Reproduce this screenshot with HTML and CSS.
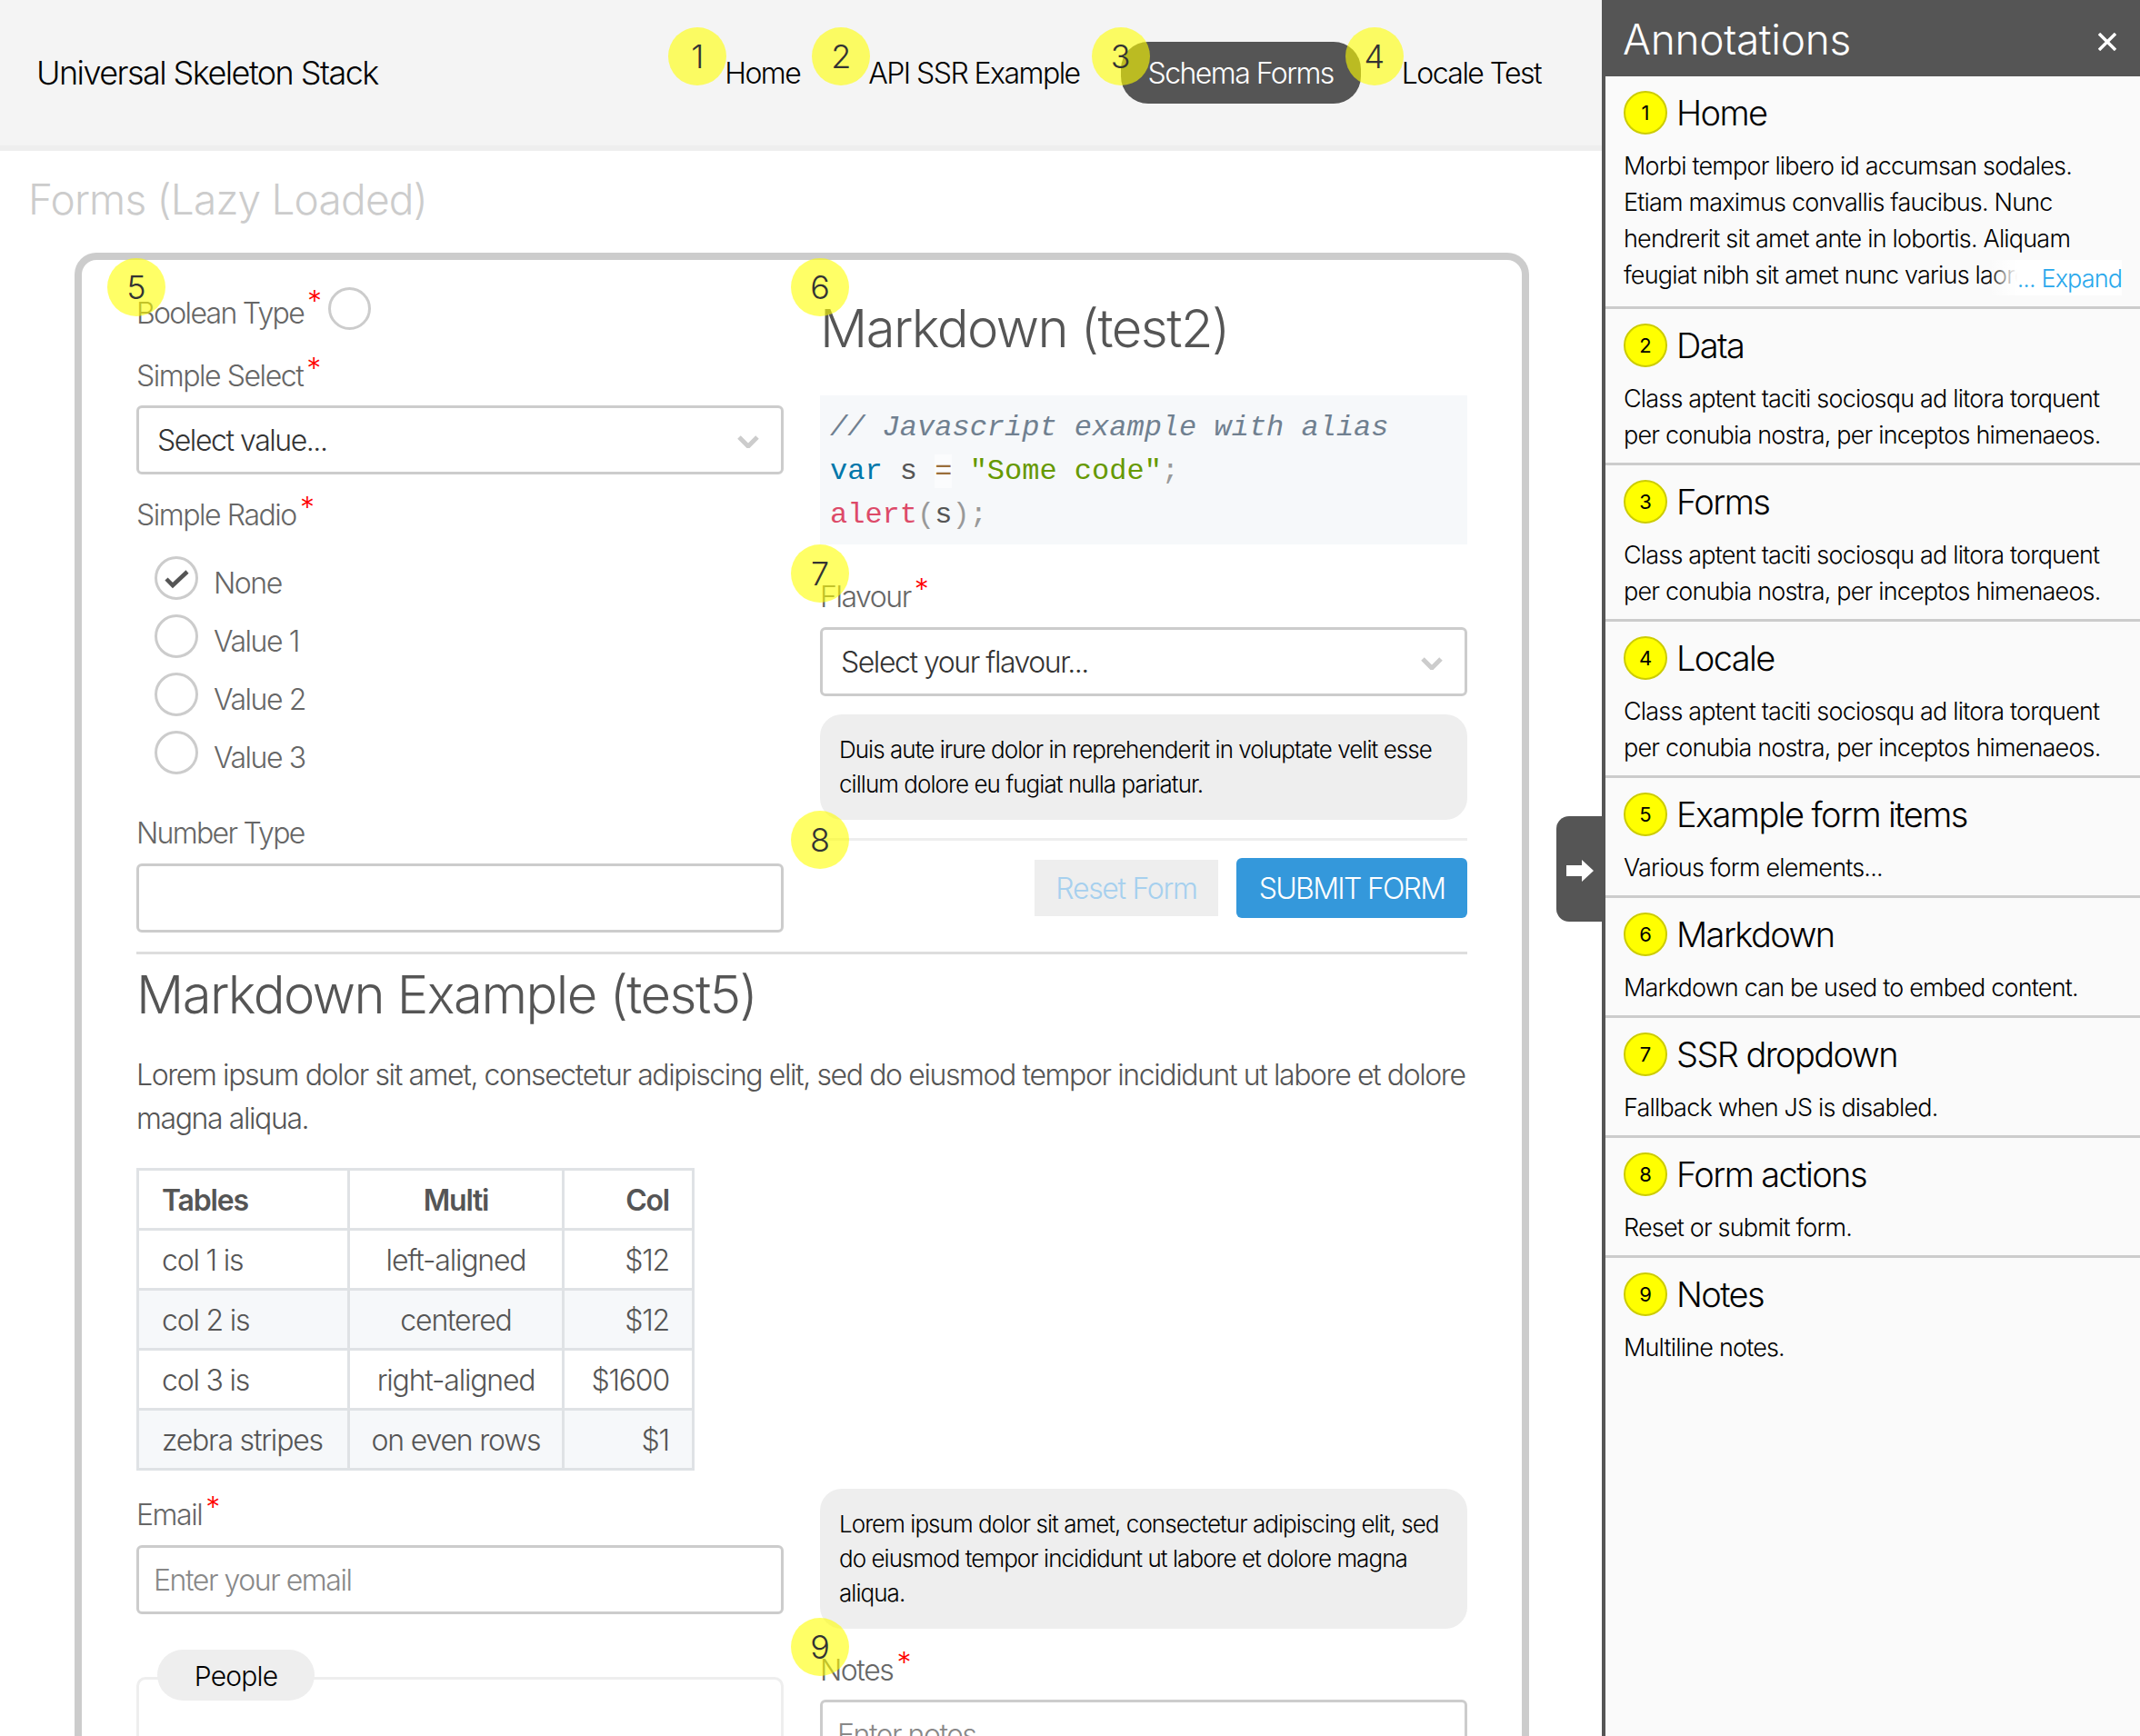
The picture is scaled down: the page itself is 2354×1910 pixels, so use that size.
FILE: index.html
```html
<!DOCTYPE html>
<html lang="en">
<head>
    <meta charset="UTF-8">
    <meta name="viewport" content="width=device-width, initial-scale=1.0">
    <title>Universal Skeleton Stack</title>
    <link rel="stylesheet" href="styles.css">
</head>
<body>
<div class="app">
    <div class="page">
        <header class="topbar">
            <div class="brand">Universal Skeleton Stack</div>
            <nav class="nav">
                <a class="nav-link"><span class="marker">1</span>Home</a>
                <a class="nav-link"><span class="marker">2</span>API SSR Example</a>
                <a class="nav-link active"><span class="marker">3</span>Schema Forms</a>
                <a class="nav-link"><span class="marker">4</span>Locale Test</a>
            </nav>
        </header>

        <main class="content">
            <h1 class="page-title">Forms (Lazy Loaded)</h1>
            <form class="schema-form">
                <div class="form-grid">
                    <div class="form-col">
                        <div class="field toggle-field">
                            <span class="marker">5</span>
                            <label class="label req">Boolean Type</label>
                            <span class="toggle"></span>
                        </div>
                        <div class="field select-field">
                            <label class="label req">Simple Select</label>
                            <div class="select">Select value...
                                <svg class="chevron" viewBox="0 0 24 14"><path d="M2 2l10 10L22 2" fill="none" stroke="#ccc" stroke-width="5"/></svg>
                            </div>
                        </div>
                        <div class="field radio-field">
                            <label class="label req">Simple Radio</label>
                            <div class="radios">
                                <div class="radio-row"><span class="radio">
                                    <svg viewBox="0 0 44 44"><path d="M11 23l7 7 16-15" fill="none" stroke="#555" stroke-width="4.5"/></svg>
                                </span>None</div>
                                <div class="radio-row"><span class="radio"></span>Value 1</div>
                                <div class="radio-row"><span class="radio"></span>Value 2</div>
                                <div class="radio-row"><span class="radio"></span>Value 3</div>
                            </div>
                        </div>
                        <div class="field number-field">
                            <label class="label">Number Type</label>
                            <div class="input"></div>
                        </div>
                    </div>
                    <div class="form-col">
                        <div class="markdown">
                            <span class="marker">6</span>
                            <h2 class="md-title">Markdown (test2)</h2>
                            <pre class="code"><span class="c-comment">// Javascript example with alias</span>
<span class="c-key">var</span> s <span class="c-op">=</span> <span class="c-str">"Some code"</span><span class="c-punc">;</span>
<span class="c-fn">alert</span><span class="c-punc">(</span>s<span class="c-punc">)</span><span class="c-punc">;</span></pre>
                        </div>
                        <div class="field flavour-field">
                            <span class="marker">7</span>
                            <label class="label req">Flavour</label>
                            <div class="select">Select your flavour...
                                <svg class="chevron" viewBox="0 0 24 14"><path d="M2 2l10 10L22 2" fill="none" stroke="#ccc" stroke-width="5"/></svg>
                            </div>
                        </div>
                        <div class="note">Duis aute irure dolor in reprehenderit in voluptate velit esse cillum dolore eu fugiat nulla pariatur.</div>
                        <div class="actions">
                            <span class="marker">8</span>
                            <button type="button" class="btn-reset">Reset Form</button>
                            <button type="button" class="btn-submit">SUBMIT FORM</button>
                        </div>
                    </div>
                </div>

                <div class="md-block">
                    <h2 class="md-title">Markdown Example (test5)</h2>
                    <p class="md-text">Lorem ipsum dolor sit amet, consectetur adipiscing elit, sed do eiusmod tempor incididunt ut labore et dolore magna aliqua.</p>
                    <table class="md-table">
                        <thead>
                            <tr><th>Tables</th><th class="center">Multi</th><th class="right">Col</th></tr>
                        </thead>
                        <tbody>
                            <tr><td>col 1 is</td><td class="center">left-aligned</td><td class="right">$12</td></tr>
                            <tr><td>col 2 is</td><td class="center">centered</td><td class="right">$12</td></tr>
                            <tr><td>col 3 is</td><td class="center">right-aligned</td><td class="right">$1600</td></tr>
                            <tr><td>zebra stripes</td><td class="center">on even rows</td><td class="right">$1</td></tr>
                        </tbody>
                    </table>
                </div>

                <div class="form-grid lower">
                    <div class="form-col">
                        <div class="field email-field">
                            <label class="label req">Email</label>
                            <div class="input placeholder">Enter your email</div>
                        </div>
                        <div class="people">
                            <span class="legend">People</span>
                        </div>
                    </div>
                    <div class="form-col">
                        <div class="note note-lorem">Lorem ipsum dolor sit amet, consectetur adipiscing elit, sed do eiusmod tempor incididunt ut labore et dolore magna aliqua.</div>
                        <div class="field notes-field">
                            <span class="marker">9</span>
                            <label class="label req">Notes</label>
                            <div class="input placeholder">Enter notes</div>
                        </div>
                    </div>
                </div>
            </form>
        </main>
    </div>

    <aside class="sidebar">
        <button type="button" class="sidebar-tab">
            <svg viewBox="0 0 30 24"><path d="M0 6h17V0l13 12-13 12v-6H0z" fill="#fff"/></svg>
        </button>
        <div class="sidebar-head">
            <span>Annotations</span>
            <svg class="close" viewBox="0 0 20 20"><path d="M1 1l18 18M19 1L1 19" stroke="#fff" stroke-width="3.4"/></svg>
        </div>
        <section class="note-item clamped">
            <h3><span class="dot">1</span>Home</h3>
            <p>Morbi tempor libero id accumsan sodales. Etiam maximus convallis faucibus. Nunc hendrerit sit amet ante in lobortis. Aliquam feugiat nibh sit amet nunc varius laoreet.</p>
            <a class="expand">... Expand</a>
        </section>
        <section class="note-item">
            <h3><span class="dot">2</span>Data</h3>
            <p>Class aptent taciti sociosqu ad litora torquent per conubia nostra, per inceptos himenaeos.</p>
        </section>
        <section class="note-item">
            <h3><span class="dot">3</span>Forms</h3>
            <p>Class aptent taciti sociosqu ad litora torquent per conubia nostra, per inceptos himenaeos.</p>
        </section>
        <section class="note-item">
            <h3><span class="dot">4</span>Locale</h3>
            <p>Class aptent taciti sociosqu ad litora torquent per conubia nostra, per inceptos himenaeos.</p>
        </section>
        <section class="note-item">
            <h3><span class="dot">5</span>Example form items</h3>
            <p>Various form elements...</p>
        </section>
        <section class="note-item">
            <h3><span class="dot">6</span>Markdown</h3>
            <p>Markdown can be used to embed content.</p>
        </section>
        <section class="note-item">
            <h3><span class="dot">7</span>SSR dropdown</h3>
            <p>Fallback when JS is disabled.</p>
        </section>
        <section class="note-item">
            <h3><span class="dot">8</span>Form actions</h3>
            <p>Reset or submit form.</p>
        </section>
        <section class="note-item last">
            <h3><span class="dot">9</span>Notes</h3>
            <p>Multiline notes.</p>
        </section>
    </aside>
</div>
</body>
</html>
```
FILE: styles.css
```css
* {
    box-sizing: border-box;
}
html, body {
    margin: 0;
    padding: 0;
    height: 100%;
    overflow: hidden;
}
body {
    font-family: Inter, "Liberation Sans", sans-serif;
    font-weight: 300;
    font-size: 32px;
    letter-spacing: -1.45px;
    color: #555;
    background: #fff;
}
.app {
    display: flex;
    height: 1910px;
    overflow: hidden;
}
.page {
    width: 1762px;
    flex: none;
    overflow: hidden;
}

/* top bar */
.topbar {
    height: 166px;
    display: flex;
    align-items: center;
    justify-content: space-between;
    padding: 0 37px 0 40px;
    background: #f4f4f4;
    border-bottom: 6px solid #eee;
}
.brand {
    font-size: 36px;
    color: #000;
    letter-spacing: -1.55px;
}
.nav {
    display: flex;
    gap: 15px;
}
.nav-link {
    position: relative;
    height: 68px;
    line-height: 70px;
    padding: 0 30px;
    font-size: 32px;
    letter-spacing: -1.55px;
    color: #000;
    border-radius: 30px;
}
.nav-link.active {
    background: #555;
    color: #fff;
}

/* numbered hint bubbles */
.marker {
    position: absolute;
    left: -32px;
    top: -16px;
    width: 64px;
    height: 64px;
    line-height: 64px;
    border-radius: 50%;
    text-align: center;
    font-size: 36px;
    font-weight: 300;
    letter-spacing: 0;
    color: #333;
    background: rgba(255, 255, 0, 0.6);
}

/* main */
.content {
    padding: 0 80px 0 31px;
}
.page-title {
    margin: 0;
    height: 112px;
    line-height: 106px;
    font-size: 46px;
    font-weight: 300;
    color: #ccc;
    letter-spacing: -0.8px;
}
.schema-form {
    width: 1600px;
    margin-left: 51px;
    padding: 0 60px;
    border: 8px solid #ccc;
    border-bottom: 0;
    border-radius: 24px 24px 0 0;
}
.form-grid {
    display: grid;
    grid-template-columns: 712px 712px;
    column-gap: 40px;
    height: 761px;
}
.form-grid.lower {
    height: auto;
    margin-top: 20px;
}
.form-col {
    min-width: 0;
}
.field {
    position: relative;
}
.label {
    display: inline-block;
    height: 45px;
    line-height: 45px;
    color: #666;
}
.label.req::after {
    content: "*";
    color: #f00;
    font-size: 32px;
    position: relative;
    top: -8px;
    margin-left: 4px;
}
.toggle-field {
    display: flex;
    align-items: flex-start;
    margin-top: 30px;
}
.toggle-field .marker {
    top: -32px;
}
.toggle-field .label {
    margin-top: 6px;
    letter-spacing: -1.7px;
}
.toggle-field .label.req::after {
    top: -13px;
}
.toggle {
    width: 47px;
    height: 47px;
    margin-left: 9px;
    border: 3px solid #ccc;
    border-radius: 50%;
}
.select-field {
    margin-top: 24px;
}
.select, .input {
    position: relative;
    height: 76px;
    line-height: 72px;
    border: 3px solid #ccc;
    border-radius: 6px;
    background: #fff;
}
.select {
    margin-top: 11px;
    padding-left: 20px;
    color: #333;
}
.select-field .select {
    margin-top: 10px;
}
.input {
    margin-top: 12px;
    padding-left: 16px;
}
.placeholder {
    color: #888;
}
.chevron {
    position: absolute;
    right: 24px;
    top: 30px;
    width: 24px;
    height: 14px;
}
.radio-field {
    margin-top: 22px;
}
.radios {
    margin-top: 20px;
    padding-left: 20px;
}
.radio-row {
    display: flex;
    align-items: center;
    height: 64px;
    color: #666;
}
.radio {
    width: 48px;
    height: 48px;
    margin: -10px 17px 0 0;
    border: 3px solid #ccc;
    border-radius: 50%;
}
.radio svg {
    display: block;
    width: 44px;
    height: 44px;
    margin: -1px;
}
.number-field {
    margin-top: 29px;
}
.number-field .label {
    letter-spacing: -1.7px;
}
.number-field .input {
    margin-top: 11px;
}
.markdown {
    position: relative;
    padding-top: 40px;
}
.markdown .marker {
    top: -2px;
}
.md-title {
    margin: 0;
    font-size: 58px;
    line-height: 70px;
    font-weight: 300;
    color: #555;
    letter-spacing: -1.55px;
}
.code {
    margin: 39px 0 0;
    height: 164px;
    padding: 12px 11px;
    background: #f6f8fa;
    font-family: "Liberation Mono", monospace;
    font-size: 32px;
    line-height: 48px;
    letter-spacing: 0;
    color: #555;
    font-weight: 400;
}
.c-comment { color: #708090; font-style: italic; }
.c-key { color: #07a; }
.c-op { color: #9a6e3a; background: rgba(255, 255, 255, 0.5); }
.c-str { color: #690; }
.c-fn { color: #dd4a68; }
.c-punc { color: #999; }
.flavour-field {
    margin-top: 35px;
}
.flavour-field .marker, .notes-field .marker {
    top: -35px;
}
.note {
    margin-top: 20px;
    padding: 20px 20px 20px 21px;
    border-radius: 24px;
    background: #eee;
    color: #000;
    font-size: 26px;
    line-height: 38px;
    letter-spacing: -0.96px;
}
.note-lorem {
    margin-top: 0;
}
.actions {
    position: relative;
    display: flex;
    justify-content: flex-end;
    align-items: center;
    gap: 20px;
    margin-top: 20px;
    padding-top: 19px;
    border-top: 3px solid #eee;
}
.actions .marker {
    top: -33px;
}
.btn-reset, .btn-submit {
    font-family: inherit;
    font-weight: 300;
    font-size: 32px;
    border: 0;
    padding: 0;
}
.btn-reset {
    width: 202px;
    height: 62px;
    letter-spacing: -1.3px;
    background: #eee;
    color: #a6d0ee;
}
.btn-submit {
    width: 254px;
    height: 66px;
    letter-spacing: -1.7px;
    border-radius: 6px;
    background: #3498db;
    color: #fff;
}
.md-block {
    border-top: 3px solid #ddd;
}
.md-block .md-title {
    margin-top: 9px;
}
.md-text {
    margin: 30px 0 0;
    line-height: 48px;
    letter-spacing: -1.4px;
}
.md-table {
    margin-top: 30px;
    width: 611px;
    table-layout: fixed;
    border-collapse: collapse;
    letter-spacing: -1.2px;
    border: 3px solid #dfe2e5;
}
.md-table th, .md-table td {
    height: 66px;
    padding: 2px 25px 0;
    border: 3px solid #dfe2e5;
    text-align: left;
}
.md-table th {
    font-weight: 600;
}
.md-table th:nth-child(1) { width: 232px; }
.md-table th:nth-child(2) { width: 236px; }
.md-table th:nth-child(3) { width: 143px; }
.md-table tbody tr:nth-child(even) {
    background: #f6f8fa;
}
.md-table .center { text-align: center; padding: 2px 0 0; }
.md-table .right { text-align: right; }
.email-field {
    margin-top: 6px;
}
.email-field .input {
    margin-top: 11px;
}
.people {
    position: relative;
    height: 200px;
    margin-top: 69px;
    border: 3px solid #eee;
    border-radius: 10px;
}
.legend {
    position: absolute;
    left: 20px;
    top: -33px;
    width: 173px;
    height: 56px;
    line-height: 58px;
    border-radius: 28px;
    text-align: center;
    font-size: 30px;
    letter-spacing: -0.8px;
    background: #eee;
    color: #000;
}
.notes-field {
    margin-top: 23px;
}
.notes-field .input {
    margin-top: 10px;
}

/* annotations */
.sidebar {
    position: relative;
    flex: none;
    width: 592px;
    border-left: 4px solid #555;
    background: #fafafa;
    color: #000;
}
.sidebar-tab {
    position: absolute;
    left: -54px;
    top: 898px;
    width: 50px;
    height: 116px;
    padding: 0;
    border: 0;
    border-radius: 14px 0 0 14px;
    background: #555;
}
.sidebar-tab svg {
    display: block;
    width: 30px;
    height: 24px;
    margin: 4px 0 0 11px;
}
.sidebar-head {
    display: flex;
    justify-content: space-between;
    align-items: center;
    height: 84px;
    margin-left: -4px;
    padding: 2px 26px 0 23px;
    background: #555;
    color: #fff;
    font-size: 46px;
    letter-spacing: -0.3px;
}
.close {
    width: 20px;
    height: 20px;
    margin-top: 6px;
}
.note-item {
    position: relative;
    padding: 16px 20px 10px 20px;
    border-bottom: 3px solid #ccc;
}
.note-item.clamped {
    padding-bottom: 14px;
}
.note-item.last {
    border-bottom: 0;
}
.note-item h3 {
    display: flex;
    align-items: center;
    margin: 0;
    height: 48px;
    font-size: 38px;
    font-weight: 300;
    letter-spacing: -1.6px;
}
.dot {
    width: 48px;
    height: 48px;
    line-height: 44px;
    margin-right: 10px;
    border: 2px solid #cc0;
    border-radius: 50%;
    background: #ff0;
    font-size: 22px;
    font-weight: 400;
    letter-spacing: 0;
    text-align: center;
    flex: none;
}
.note-item p {
    margin: 15px 0 0;
    font-size: 27px;
    line-height: 40px;
    letter-spacing: -0.82px;
}
.clamped p {
    height: 160px;
    overflow: hidden;
}
.expand {
    position: absolute;
    right: 20px;
    bottom: 12px;
    height: 39px;
    line-height: 41px;
    padding-left: 31px;
    font-size: 27px;
    letter-spacing: -0.9px;
    color: #29a8ec;
    background: linear-gradient(to right, rgba(255, 255, 255, 0), rgba(255, 255, 255, 0.6) 17px, #fff 31px);
}
```
